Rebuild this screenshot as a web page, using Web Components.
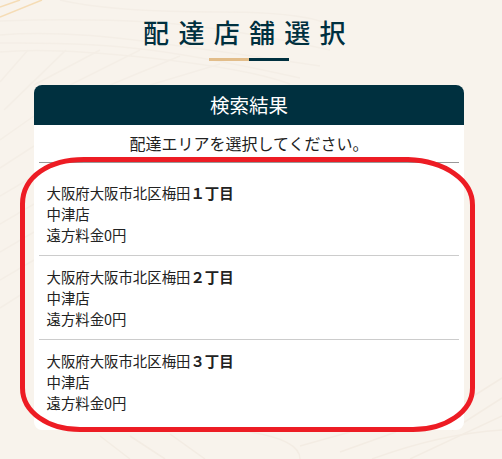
<!DOCTYPE html>
<html lang="ja">
<head>
<meta charset="utf-8">
<title>配達店舗選択</title>
<style>
  html, body { margin: 0; height: 100%; }
  body {
    background: #f8f3ec;
    font-family: "Noto Sans CJK JP", "Noto Sans", sans-serif;
    color: #222;
    overflow: hidden;
  }
</style>
</head>
<body>
<shop-select-page>
  <page-title slot="title">配達店舗選択</page-title>
  <result-card heading="検索結果" note="配達エリアを選択してください。">
    <area-row town="大阪府大阪市北区梅田" chome="１丁目" store="中津店" fee="遠方料金0円"></area-row>
    <area-row town="大阪府大阪市北区梅田" chome="２丁目" store="中津店" fee="遠方料金0円"></area-row>
    <area-row town="大阪府大阪市北区梅田" chome="３丁目" store="中津店" fee="遠方料金0円"></area-row>
  </result-card>
</shop-select-page>

<script>
class ShopSelectPage extends HTMLElement {
    constructor() {
        super();
        this.attachShadow({ mode: 'open' });
    }

    connectedCallback() {
        this.shadowRoot.innerHTML = `
            <style>
                :host { display: block; position: relative; width: 502px; height: 459px; overflow: hidden; }
                .bg { position: absolute; inset: 0; }
                .content { position: relative; display: flex; flex-direction: column; padding: 0 38px 0 34px; }
                .ring { position: absolute; inset: 0; pointer-events: none; }
            </style>
            <svg class="bg" width="502" height="459" viewBox="0 0 502 459" fill="none">
                <g stroke="#f4eee6" stroke-width="1.5">
                    <path d="M60 0Q110 12 220 12T340 34"/>
                    <path d="M0 21Q80 18 150 22T330 50"/>
                    <path d="M0 35Q60 30 150 42T320 66"/>
                    <path d="M0 43Q90 42 150 50T300 78"/>
                    <path d="M0 52Q50 47 150 58T290 84"/>
                    <path d="M0 82L28 50"/>
                    <path d="M4 110L66 50"/>
                    <path d="M34 85L100 50"/>
                    <path d="M70 85L140 50"/>
                    <path d="M110 85L180 56"/>
                    <path d="M150 85L220 64"/>
                    <path d="M0 140L34 116"/>
                    <path d="M0 168L34 146"/>
                    <path d="M0 196L34 176"/>
                    <path d="M0 224L34 204"/>
                    <path d="M0 252L34 232"/>
                    <path d="M0 280L34 260"/>
                    <path d="M0 308L22 294"/>
                </g>
                <g stroke="#f3ece3" stroke-width="1.5">
                    <path d="M464 402L502 378"/>
                    <path d="M452 430L502 398"/>
                    <path d="M410 459L502 416"/>
                    <path d="M372 459Q440 434 502 430"/>
                    <path d="M340 452L396 432"/>
                    <path d="M300 446L350 432"/>
                    <path d="M250 432Q300 440 300 459"/>
                    <path d="M130 436L165 459"/>
                    <path d="M100 436L130 459"/>
                    <path d="M170 434L205 459"/>
                </g>
                <g stroke="#f5dcb5" stroke-width="1.5">
                    <path d="M0 7L20 0"/>
                    <path d="M0 17L42 0"/>
                </g>
            </svg>
            <div class="content">
                <slot name="title"></slot>
                <slot></slot>
            </div>
            <svg class="ring" width="502" height="459" viewBox="0 0 502 459" fill="none">
                <path d="M84 159.5H408C445 161 472.5 180 472.5 205V388C472.5 412 445 429.5 413 429.5H80C48 429.5 22.5 412 22.5 388V204C22.5 176 50 159.5 84 159.5Z" stroke="#ed1c24" stroke-width="5"/>
            </svg>
        `;
    }
}

class PageTitle extends HTMLElement {
    constructor() {
        super();
        this.attachShadow({ mode: 'open' });
    }

    connectedCallback() {
        this.shadowRoot.innerHTML = `
            <style>
                :host { display: flex; flex-direction: column; align-items: center; height: 85px; padding-top: 14px; box-sizing: border-box; }
                h1 {
                    margin: 0;
                    font: 500 26px/36px "Noto Sans CJK JP", sans-serif;
                    letter-spacing: 9.3px;
                    color: #00303f;
                }
                .rule { display: flex; margin-top: 8px; }
                .rule span { width: 40px; height: 3px; }
                .rule span:first-child { background: #e2bd8a; }
                .rule span:last-child { background: #00303f; }
            </style>
            <h1><slot></slot></h1>
            <div class="rule"><span></span><span></span></div>
        `;
    }
}

class ResultCard extends HTMLElement {
    constructor() {
        super();
        this.attachShadow({ mode: 'open' });
    }

    connectedCallback() {
        this.shadowRoot.innerHTML = `
            <style>
                :host { display: block; background: #fff; border-radius: 8px; overflow: hidden; padding-bottom: 7px; }
                header { height: 40px; background: #00303f; color: #fff; font-size: 19.5px; line-height: 40px; text-align: center; }
                .note { height: 37px; line-height: 36px; font-size: 16px; text-align: center; color: #222; border-bottom: 1px solid #999; margin: 0 5px 19px; }
            </style>
            <header>${this.getAttribute('heading')}</header>
            <div class="note">${this.getAttribute('note')}</div>
            <slot></slot>
        `;
    }
}

class AreaRow extends HTMLElement {
    constructor() {
        super();
        this.attachShadow({ mode: 'open' });
    }

    connectedCallback() {
        this.shadowRoot.innerHTML = `
            <style>
                :host { display: block; margin: 0 5px 10px; padding: 0 8px 10px 7.5px; font-size: 14.4px; line-height: 21px; color: #222; border-bottom: 1px solid #ccc; }
                :host(:last-child) { border-bottom: none; margin-bottom: 0; }
                b { font-weight: 700; }
            </style>
            <div>${this.getAttribute('town')}<b>${this.getAttribute('chome')}</b></div>
            <div>${this.getAttribute('store')}</div>
            <div>${this.getAttribute('fee')}</div>
        `;
    }
}

customElements.define('shop-select-page', ShopSelectPage);
customElements.define('page-title', PageTitle);
customElements.define('result-card', ResultCard);
customElements.define('area-row', AreaRow);
</script>
</body>
</html>
